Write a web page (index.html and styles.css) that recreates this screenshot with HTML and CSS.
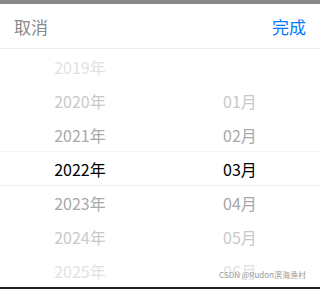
FILE: index.html
```html
<!DOCTYPE html>
<html lang="zh-CN">
<head>
    <meta charset="UTF-8">
    <meta name="viewport" content="width=device-width, initial-scale=1.0">
    <title>选择年月</title>
    <link rel="stylesheet" href="styles.css">
</head>
<body>
    <div class="backdrop"></div>
    <div class="sheet">
        <div class="toolbar">
            <span class="cancel">取消</span>
            <span class="confirm">完成</span>
        </div>
        <div class="picker">
            <div class="column">
                <div class="item far">2019年</div>
                <div class="item mid">2020年</div>
                <div class="item near">2021年</div>
                <div class="item current">2022年</div>
                <div class="item near">2023年</div>
                <div class="item mid">2024年</div>
                <div class="item far">2025年</div>
            </div>
            <div class="column">
                <div class="item blank"></div>
                <div class="item mid">01月</div>
                <div class="item near">02月</div>
                <div class="item current">03月</div>
                <div class="item near">04月</div>
                <div class="item mid">05月</div>
                <div class="item far">06月</div>
            </div>
            <div class="indicator"></div>
            <div class="watermark">CSDN @Rudon滨海渔村</div>
        </div>
        <div class="bottom-edge"></div>
    </div>
</body>
</html>
```

FILE: styles.css
```css
body {
    margin: 0;
    font-family: "Noto Sans CJK SC", "Noto Sans", sans-serif;
    background-color: #fff;
    width: 320px;
    height: 289px;
    overflow: hidden;
}

.backdrop {
    height: 4px;
    background-color: #888;
}

.sheet {
    background-color: #fff;
}

.toolbar {
    display: flex;
    justify-content: space-between;
    align-items: center;
    height: 44px;
    padding: 0 14px;
    border-bottom: 1px solid #eee;
    font-size: 17px;
}

.cancel {
    color: #888;
}

.confirm {
    color: #007aff;
}

.picker {
    position: relative;
    display: flex;
    height: 238px;
    padding-top: 1px;
    box-sizing: border-box;
    overflow: hidden;
}

.column {
    flex: 1;
    display: flex;
    flex-direction: column;
}

.item {
    height: 34px;
    flex-shrink: 0;
    display: flex;
    align-items: center;
    justify-content: center;
    font-size: 16px;
    color: #000;
}

.item.near {
    color: #a9a9a9;
}

.item.mid {
    color: #c9c9c9;
}

.item.far {
    color: #e2e2e2;
}

.indicator {
    position: absolute;
    left: 0;
    right: 0;
    top: 102px;
    height: 33px;
    border-top: 1px solid #f3f3f3;
    border-bottom: 1px solid #eee;
    pointer-events: none;
}

.watermark {
    position: absolute;
    right: 14px;
    bottom: 7px;
    font-size: 8px;
    color: #9a9a9a;
    text-shadow: 0 0 2px #fff, 0 0 2px #fff;
}

.bottom-edge {
    height: 2px;
    background-color: #222;
}
```
